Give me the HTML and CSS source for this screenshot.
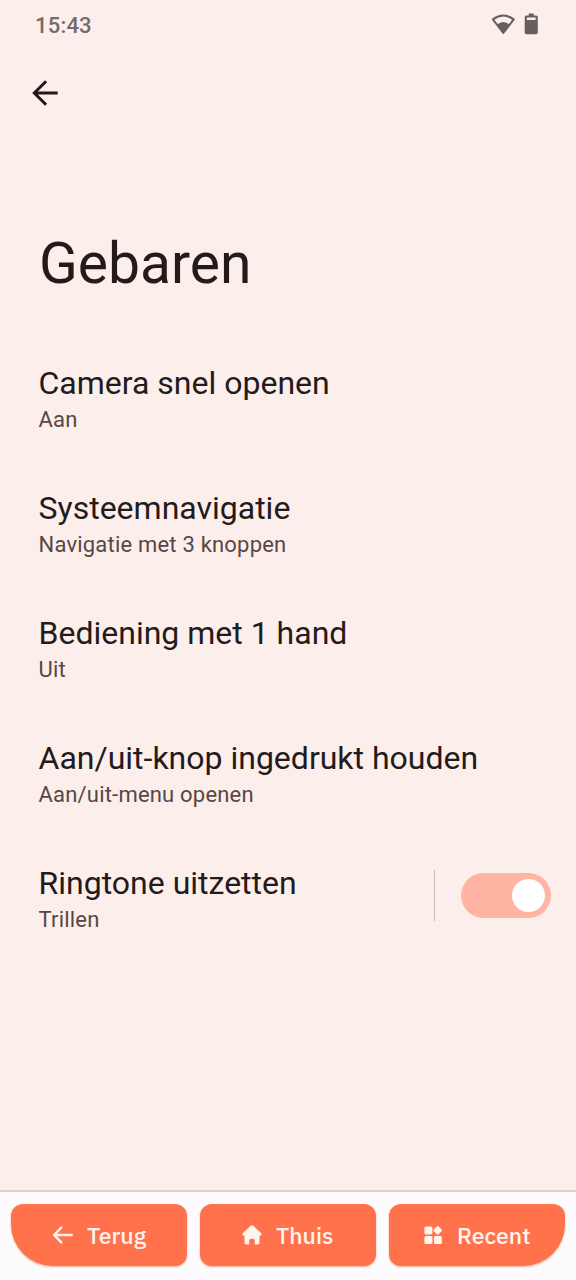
FILE: index.html
```html
<!DOCTYPE html>
<html lang="nl">
<head>
<meta charset="utf-8">
<title>Gebaren</title>
<link rel="stylesheet" href="styles.css">
</head>
<body>
<div class="screen">
  <header class="status">
    <span class="clock">15:43</span>
    <svg class="status-icons" width="50" height="26" viewBox="0 0 50 26">
      <path d="M13.300 21 2.900 7.400Q13.300-.2 23.700 7.400Z" fill="none" stroke="#665f5e" stroke-width="2" stroke-linejoin="round"/>
      <path d="M13.300 21.500 7 12.600Q13.300 7.500 19.600 12.600Z" fill="#665f5e"/>
      <path transform="translate(2 .6)" fill-rule="evenodd" d="M36.700 1h5v1.800h2.400q1.700 0 1.700 1.700v15.500q0 1.700-1.700 1.700h-9.700q-1.700 0-1.700-1.700V4.500q0-1.700 1.700-1.700h2.300ZM34.900 5v2.400h8.700V5Z" fill="#665f5e"/>
    </svg>
  </header>
  <nav class="toolbar">
    <svg width="26" height="26" viewBox="0 0 26 26" fill="none" stroke="#1f1a19" stroke-width="3"><path d="M14.100 1.300 2.300 13 14.100 24.700M2.300 13H25.700"/></svg>
  </nav>
  <h1 class="title">Gebaren</h1>
  <main class="list">
    <div class="row"><div class="text"><div class="name">Camera snel openen</div><div class="sub">Aan</div></div></div>
    <div class="row"><div class="text"><div class="name">Systeemnavigatie</div><div class="sub">Navigatie met 3 knoppen</div></div></div>
    <div class="row"><div class="text"><div class="name">Bediening met 1 hand</div><div class="sub">Uit</div></div></div>
    <div class="row"><div class="text"><div class="name">Aan/uit-knop ingedrukt houden</div><div class="sub">Aan/uit-menu openen</div></div></div>
    <div class="row"><div class="text"><div class="name">Ringtone uitzetten</div><div class="sub">Trillen</div></div>
      <div class="control"><span class="switch"><span class="thumb"></span></span></div>
    </div>
  </main>
  <footer class="navbar">
    <div class="key key-back">
      <svg width="22" height="20" viewBox="0 0 22 20" fill="none" stroke="#fff4ee" stroke-width="2.500" stroke-linecap="round" stroke-linejoin="round"><path d="M9.200 2.700 2.200 10 9.200 17.300M2.200 10H19.700"/></svg>
      <span class="label">Terug</span>
    </div>
    <div class="key key-home">
      <svg width="22" height="20" viewBox="0 0 22 20" fill="#fff4ee"><path d="M9.600.800q1.400-1.100 2.800 0l7.600 7.300q1.500 1.700-.700 2.700h-.800v6.700q0 2-2 2h-2.700v-3.700q0-2-1.700-2h-2.200q-1.700 0-1.700 2v3.700H5.500q-2 0-2-2v-6.700h-.800q-2.200-1-.700-2.700Z"/></svg>
      <span class="label">Thuis</span>
    </div>
    <div class="key key-recent">
      <svg width="22" height="20" viewBox="0 0 22 20" fill="#fff4ee"><rect x="2.400" y="1.400" width="8" height="8" rx="1.600"/><rect x="2.400" y="11" width="8" height="8" rx="1.600"/><rect x="11.900" y="11" width="8" height="8" rx="1.600"/><rect x="12.300" y="2" width="6.800" height="6.800" rx="1.300" transform="rotate(45 15.700 5.400)"/></svg>
      <span class="label">Recent</span>
    </div>
  </footer>
</div>
</body>
</html>
```
FILE: styles.css
```css
body { margin: 0; }
.screen {
  width: 576px;
  height: 1280px;
  display: flex;
  flex-direction: column;
  background: #fceeeb;
  font-family: Roboto, "Liberation Sans", sans-serif;
  color: #231b1a;
}
svg { display: block; flex: none; }
.status {
  height: 50px;
  box-sizing: border-box;
  padding: 12px 36px 0 35px;
  display: flex;
  justify-content: space-between;
  align-items: flex-start;
}
.clock { padding-top: 1px; font-size: 22px; line-height: 26px; font-weight: 500; color: #736b6a; letter-spacing: 0.2px; }
.toolbar { height: 180px; box-sizing: border-box; padding: 30px 0 0 32px; }
.title { margin: 0; padding-left: 39px; height: 116px; font-size: 57px; font-weight: 400; line-height: 68px; }
.list { flex: 1; }
.row { height: 125px; display: flex; justify-content: space-between; padding: 0 25px 0 38.5px; }
.text { padding-top: 18px; }
.name { font-size: 32px; line-height: 38px; white-space: nowrap; }
.sub { margin-top: 5px; font-size: 22px; line-height: 26px; color: #574744; letter-spacing: 0.2px; }
.control { height: 51px; margin-top: 24px; border-left: 1px solid #c6b9b7; padding-left: 26px; display: flex; align-items: center; }
.switch { width: 90px; height: 45px; border-radius: 23px; background: #ffb5a2; box-sizing: border-box; padding: 6px; display: flex; justify-content: flex-end; align-items: center; }
.thumb { width: 33px; height: 33px; border-radius: 50%; background: #fff; }
.navbar {
  height: 90px;
  box-sizing: border-box;
  border-top: 2px solid #ddd0cf;
  background: #fdfbfd;
  padding: 12px 11px 0;
  display: flex;
  gap: 13px;
}
.key {
  width: 176px;
  height: 62px;
  box-sizing: border-box;
  border-radius: 12px;
  background: #ff724b;
  box-shadow: 0 1px 2px #f5a78e;
  color: #fff4ee;
  display: flex;
  align-items: center;
  padding: 0 0 0 41px;
}
.key-back { border-radius: 12px 12px 12px 42px; }
.key-recent { border-radius: 12px 12px 42px 12px; padding-left: 33px; }
.label { font: 500 23px/30px "IBM Plex Sans", "Noto Sans", sans-serif; margin-left: 13px; }
```
